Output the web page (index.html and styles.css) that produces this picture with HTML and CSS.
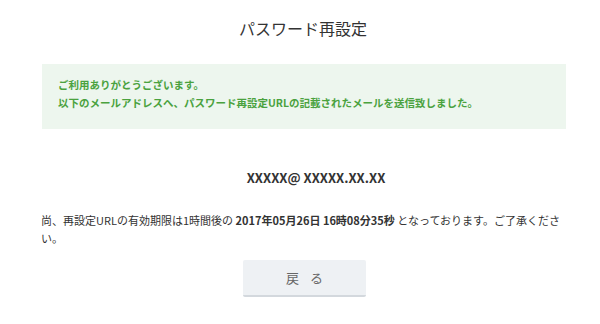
FILE: index.html
```html
<!DOCTYPE html>
<html lang="ja">
<head>
<meta charset="utf-8">
<title>パスワード再設定</title>
<link rel="stylesheet" href="styles.css">
</head>
<body>
<main class="page">
  <h1 class="title">パスワード再設定</h1>
  <div class="notice">
    <p>ご利用ありがとうございます。</p>
    <p>以下のメールアドレスへ、パスワード再設定URLの記載されたメールを送信致しました。</p>
  </div>
  <p class="email">XXXXX@ XXXXX.XX.XX</p>
  <p class="note">尚、再設定URLの有効期限は1時間後の <strong>2017年05月26日 16時08分35秒</strong> となっております。ご了承ください。</p>
  <div class="actions">
    <button class="back" type="button"><span>戻</span><span>る</span></button>
  </div>
</main>
</body>
</html>
```
FILE: styles.css
```css
html, body {
  margin: 0;
  padding: 0;
  background: #ffffff;
}
body {
  font-family: "Noto Sans CJK JP", "Noto Sans", sans-serif;
  color: #333333;
}
.page {
  width: 600px;
  display: flex;
  flex-direction: column;
}
.title {
  margin: 0;
  padding: 16px 0 0 6px;
  height: 48px;
  box-sizing: border-box;
  font-size: 16px;
  line-height: 24px;
  font-weight: 400;
  text-align: center;
  color: #333333;
}
.notice {
  margin: 16px 34px 0 42px;
  padding: 12px 16px 17px;
  background: #edf6ee;
  color: #4aa23e;
  font-size: 10.5px;
  line-height: 18px;
  font-weight: 700;
}
.notice p {
  margin: 0;
}
.email {
  margin: 39px 0 0;
  padding-left: 32px;
  font-size: 13px;
  line-height: 20px;
  font-weight: 700;
  text-align: center;
  color: #333333;
}
.note {
  margin: 23px 0 0;
  padding: 0 31px 0 41px;
  font-size: 11px;
  line-height: 18px;
  color: #333333;
}
.note strong {
  font-weight: 700;
}
.actions {
  display: flex;
  justify-content: center;
  margin-top: 13px;
  padding-left: 9px;
}
.back {
  width: 123px;
  height: 37px;
  display: flex;
  align-items: center;
  justify-content: center;
  gap: 11px;
  border: 0;
  border-bottom: 2px solid #d3d8dd;
  border-radius: 2px;
  background: #eef1f4;
  font-family: "Noto Sans CJK JP", sans-serif;
  font-size: 13px;
  color: #666666;
  cursor: pointer;
}
```
